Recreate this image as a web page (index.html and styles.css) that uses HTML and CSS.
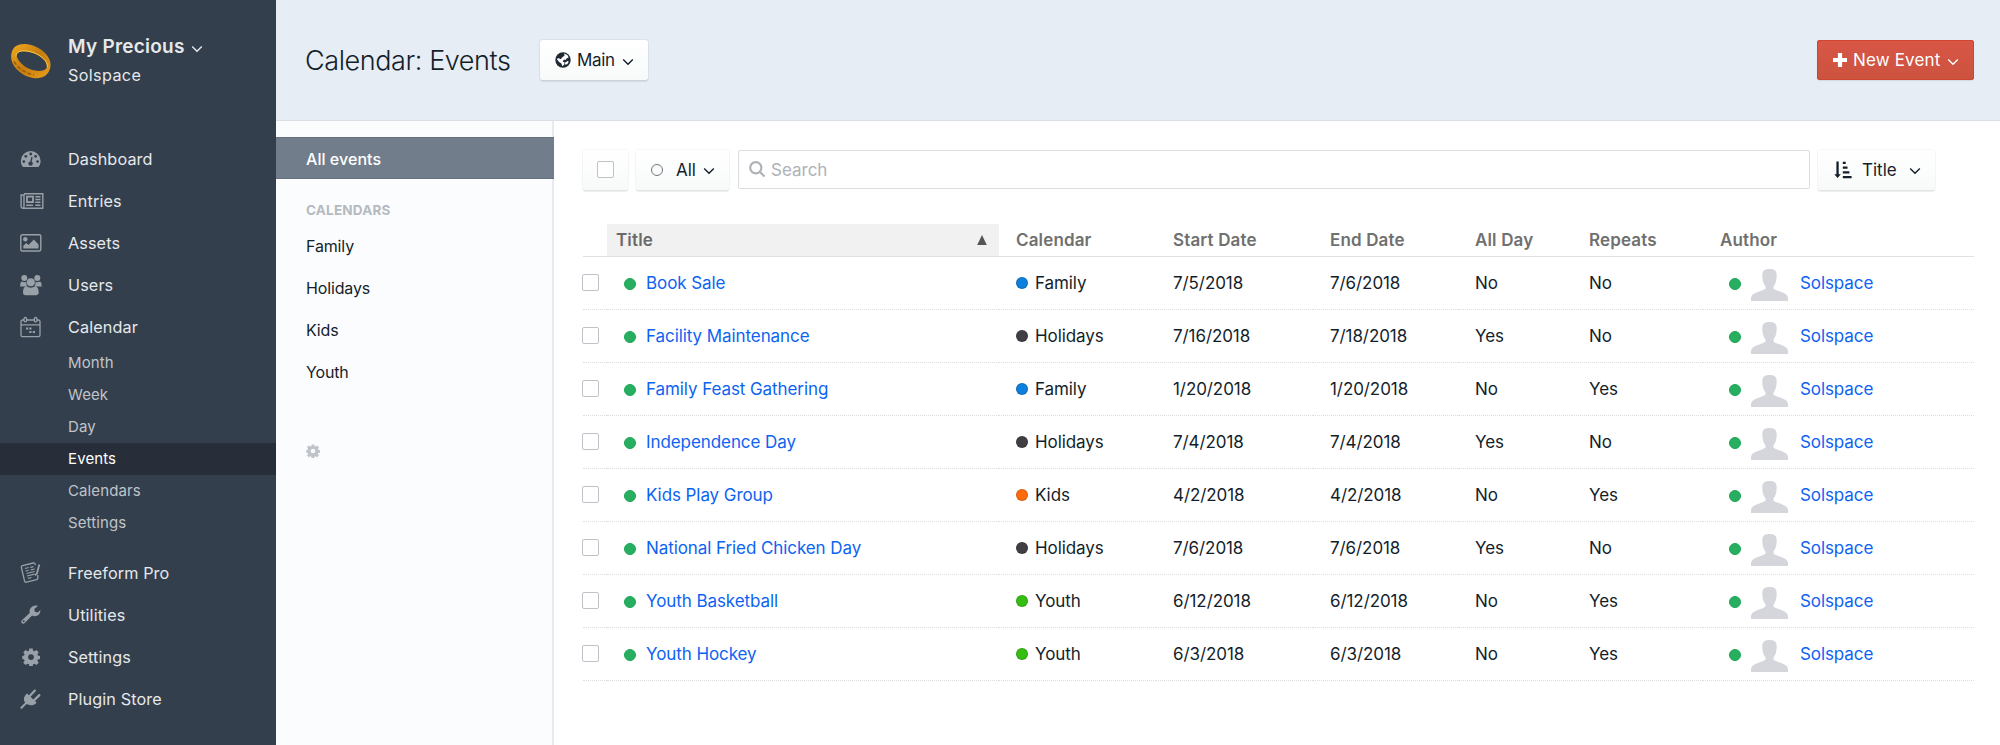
FILE: index.html
```html
<!DOCTYPE html>
<html lang="en">
<head>
<meta charset="utf-8">
<title>Calendar: Events</title>
<link rel="stylesheet" href="styles.css">
</head>
<body>
<svg class="defs" width="0" height="0">
  <symbol id="chevron" viewBox="0 0 12 8"><path d="M1.200 1.400 6 6.200l4.800-4.800" fill="none" stroke="currentColor" stroke-width="1.400"/></symbol>
  <symbol id="gear" viewBox="0 0 18 18"><path fill="currentColor" fill-rule="evenodd" d="M7.300.5h3.400l.4 2.300 1.300.5 2-1.300 2.300 2.300-1.300 2 .5 1.200 2.100.4v3.200l-2.100.4-.5 1.300 1.300 2-2.300 2.300-2-1.300-1.300.5-.4 2.200H7.300l-.4-2.200-1.300-.5-2 1.300-2.300-2.300 1.300-2-.5-1.300L.3 11V7.900l1.800-.4.5-1.200-1.300-2L3.600 2l2 1.300 1.300-.5zM9 6.200a2.900 2.900 0 1 0 0 5.800 2.900 2.900 0 0 0 0-5.800z"/></symbol>
  <symbol id="avatar" viewBox="0 0 37 32"><path fill="#d4d6dc" d="M18.500 0c5.200 0 7.200 2 7.200 6.500 0 4.500-1 8.500-3.200 11v2c.8 1.400 7 3 11 5 2.500 1.300 3.500 3 3.500 5V32H0v-2.500c0-2 1-3.700 3.500-5 4-2 10.200-3.600 11-5v-2c-2.200-2.500-3.200-6.500-3.200-11C11.300 2 13.300 0 18.500 0z"/></symbol>
</svg>
<div class="app">
  <aside class="sidebar">
    <div class="brand">
      <svg class="ring" width="42" height="38" viewBox="0 0 42 38">
        <defs><linearGradient id="gold" x1="0" y1="0" x2="1" y2="1"><stop offset="0" stop-color="#f3ab22"/><stop offset=".5" stop-color="#c47c0d"/><stop offset="1" stop-color="#eca01c"/></linearGradient></defs>
        <path fill="url(#gold)" fill-rule="evenodd" d="M1.500 11C3 4 9 1.500 15.500 2c10 .8 20 7 23.500 14.500 2 4 2 8.500.3 12.300C36.500 35 29.500 37 23 36 12.500 34.300 3.500 26.500 1.500 18c-.5-2.400-.5-4.600 0-7zM6.500 13.500c1.500 7 9.500 13 17.500 14.800 6 1.300 12 .7 12.800-3.500.8-4.500-4-9.800-11-12.800C17.500 8.500 7 8 6.500 13.500z"/>
        <path d="M5.800 14.500C6.500 7.500 15 8 23 10.500c8 2.700 14.500 8.500 14.600 14.500" fill="none" stroke="#f9c94a" stroke-width="1"/>
        <path d="M4 19.500c4.500 7.500 12 12 20 13.500" fill="none" stroke="#9a5a0a" stroke-width="1.500" stroke-dasharray="4 2"/>
      </svg>
      <div class="brand-text">
        <div class="site">My Precious <svg class="chev" width="12" height="8"><use href="#chevron"/></svg></div>
        <div class="account">Solspace</div>
      </div>
    </div>
    <nav class="nav">
      <a class="item"><svg class="icon" width="22" height="20" viewBox="0 0 22 20"><path fill="currentColor" d="M3 18C1.600 16.500.8 14.300.8 12a9.900 9.900 0 1 1 19.800 0c0 2.300-.8 4.500-2.200 6z"/><g fill="#333f4d"><circle cx="10.700" cy="5" r="1.400"/><circle cx="5.800" cy="7.300" r="1.400"/><circle cx="15.600" cy="7.300" r="1.400"/><circle cx="3.800" cy="12.600" r="1.400"/><circle cx="17.600" cy="12.600" r="1.400"/><circle cx="10.600" cy="14.600" r="2.200"/></g><path d="m10.700 14 1.300-6" stroke="#333f4d" stroke-width="1.300"/></svg>Dashboard</a>
      <a class="item"><svg class="icon" width="24" height="18" viewBox="0 0 24 18"><g fill="none" stroke="currentColor" stroke-width="1.400"><path d="M4 1.700h18.800v14.600H3A1.900 1.900 0 0 1 1.100 14.400V3H4v11.500c0 1-.4 1.800-1.200 1.800"/><rect x="7" y="4.600" width="6" height="5.500" stroke-width="1.800"/><path d="M15.300 4.700h5.200M15.300 7.500h5.200M15.300 10.300h5.200M6.200 13.200h6.800M15.300 13.200h5.200"/></g></svg>Entries</a>
      <a class="item"><svg class="icon" width="22" height="18" viewBox="0 0 22 18"><rect x=".8" y=".8" width="20" height="16.200" rx="1.400" fill="none" stroke="currentColor" stroke-width="1.400"/><circle cx="5.300" cy="5.200" r="2.200" fill="currentColor"/><path fill="currentColor" d="M3.300 14.500v-2.700l3-2.800 2.200 2.100 5.300-5.500 4.700 4.900v4z"/></svg>Assets</a>
      <a class="item"><svg class="icon" width="22" height="22" viewBox="0 0 22 22"><g fill="currentColor"><circle cx="4.300" cy="4" r="3"/><circle cx="17.300" cy="4" r="3"/><path d="M.2 12.600c0-3.200.3-5 1.800-5.100 1.400 1 3 1 4.500.2-.5 2.500.3 4 .9 4.900H1.800c-1 0-1.600.4-1.600 0zM21.600 12.600c0-3.200-.3-5-1.800-5.100-1.400 1-3 1-4.500.2.500 2.500-.3 4-.9 4.900H20c1 0 1.600.4 1.600 0z"/><circle cx="10.800" cy="8.300" r="4"/><path d="M3 18.700c0-3.900 1.200-6.300 3.500-6.500 2.600 1.900 6 1.900 8.600 0 2.300.2 3.600 2.600 3.600 6.500 0 1.600-1.200 2.500-2.800 2.500H5.700c-1.600 0-2.700-.9-2.700-2.500z"/></g></svg>Users</a>
      <a class="item"><svg class="icon" width="22" height="22" viewBox="0 0 22 22"><g fill="none" stroke="currentColor" stroke-width="1.300"><path d="M4 4H2.600A1.600 1.600 0 0 0 1 5.600V19a1.600 1.600 0 0 0 1.600 1.600h15.800A1.600 1.600 0 0 0 20 19V5.600A1.600 1.600 0 0 0 18.400 4H17M6.800 4h7.400M1 8.800h19"/><rect x="4" y="1.500" width="2.600" height="4.300" rx="1.300"/><rect x="14.300" y="1.500" width="2.600" height="4.300" rx="1.300"/></g><path fill="currentColor" d="M6 11.500h2.200v2H6zM9.300 11.500h2.200v2H9.300zM9.300 15h2.200v2H9.300zM12.800 15H15v2h-2.200z"/></svg>Calendar</a>
      <div class="sub">
        <a>Month</a><a>Week</a><a>Day</a><a class="on">Events</a><a>Calendars</a><a>Settings</a>
      </div>
      <a class="item"><svg class="icon" width="22" height="22" viewBox="0 0 22 22"><g fill="none" stroke="currentColor" stroke-width="1.300"><path d="m15.500 3-.4-1a1.500 1.500 0 0 0-1.800-1L2.500 3.700A1.500 1.500 0 0 0 1.400 5.500l3.200 13.600a1.500 1.500 0 0 0 1.800 1.100l10.300-2.500a1.500 1.500 0 0 0 1.100-1.500V13"/><path d="m5 6.500 3.600-1M5.600 9l2.800-.7M10 5.500l3.500-.8M10.500 8l4.200-1M6.500 11.500l8-2M7 14l7.500-1.900M8 16.300l3.500-.8" stroke-width="1.200"/><path d="M19.300 2.500 17 11.300l-2 2" stroke-width="1.800"/></g></svg>Freeform Pro</a>
      <a class="item"><svg class="icon" width="22" height="20" viewBox="0 0 22 20"><path fill="currentColor" fill-rule="evenodd" d="M17.800.9 14.300 4l.5 2.800 2.900.6 2.600-2.500c.3 4-2.400 6.500-5.900 6.300-1 0-1.700-.3-2.300-.7L5 17.800c-1 1-2.300 1.200-3.200.3s-.7-2.200.3-3.200l7.600-7C8.800 4 12.500-.7 17.800.9zM3.700 15.200a1 1 0 1 0 0 2 1 1 0 0 0 0-2z"/></svg>Utilities</a>
      <a class="item"><svg class="icon gear" width="18" height="18"><use href="#gear"/></svg>Settings</a>
      <a class="item"><svg class="icon" width="22" height="22" viewBox="0 0 22 22"><path fill="currentColor" d="m7 5.500 1.900 1.800L14 1.700c1.100-.9 2.600.5 1.700 1.600l-5.100 5.500 2.600 2.600 5.300-5.200c1.100-.9 2.600.6 1.700 1.700L15 13.100l1.600 1.600c-2.800 2.900-7 3.300-10 1.400L2.200 20.600c-1 .9-2.500-.5-1.600-1.600l4.500-4.300C2.900 11.500 4 8 7 5.500z"/></svg>Plugin Store</a>
    </nav>
  </aside>
  <div class="main">
    <header class="header">
      <h1>Calendar: Events</h1>
      <button class="btn site-btn"><svg class="globe" width="16" height="16" viewBox="0 0 16 16"><circle cx="8" cy="8" r="7.700" fill="#1f2935"/><path fill="#fff" d="M9.200 1.600 12.400 3l1.300 2.600-1.900.6-1.200 1.700-1.700-.3-1.200 1.800 1.900 1-.2 2.200-2.100 1.600-.9-2.600L3.800 9.800 1.700 6.700 4 6.300l1.800 1 1.500-2 2.200-1.500z"/><path fill="#fff" d="m10.200 10.500 2.400-1.600 1.200.8-1.600 2.500-2.200.4z"/></svg><span>Main</span><svg width="12" height="8"><use href="#chevron"/></svg></button>
      <button class="btn submit"><svg width="14" height="14" viewBox="0 0 14 14"><path fill="#fff" d="M4.900 0h4.200v4.900H14v4.200H9.100V14H4.900V9.100H0V4.900h4.900z"/></svg><span>New Event</span><svg width="12" height="8"><use href="#chevron"/></svg></button>
    </header>
    <div class="body">
      <nav class="sources">
        <a class="sel">All events</a>
        <h2>CALENDARS</h2>
        <a>Family</a><a>Holidays</a><a>Kids</a><a>Youth</a>
        <svg class="source-gear" width="14" height="14"><use href="#gear"/></svg>
      </nav>
      <main class="content">
        <div class="toolbar">
          <button class="btn check-btn"><i class="box"></i></button>
          <button class="btn status-btn"><i class="ring-dot"></i><span>All</span><svg width="12" height="8"><use href="#chevron"/></svg></button>
          <div class="search"><svg width="17" height="17" viewBox="0 0 17 17"><g fill="none" stroke="#adb2b8" stroke-width="2.200"><circle cx="6.800" cy="6.800" r="5.600"/><path d="m10.800 10.800 4.700 4.800"/></g></svg><span>Search</span></div>
          <button class="btn sort-btn"><svg width="18" height="18" viewBox="0 0 18 18"><path fill="#141e2b" d="M2.400.5h2.300v12.700h2.100L3.600 17 .3 13.200h2.100zM8.800.7h2.900v2.200H8.800zM8.800 5.500h4.700v2.200H8.800zM8.800 10.300h6.600v2.200H8.800zM8.800 15.100h8.800v2.200H8.800z"/></svg><span>Title</span><svg width="12" height="8"><use href="#chevron"/></svg></button>
        </div>
        <div class="table">
          <div class="row head"><div></div><div class="sorted">Title<svg width="10" height="10" viewBox="0 0 10 10"><path d="M5 0l4.800 10H.2z" fill="#555"/></svg></div><div>Calendar</div><div>Start Date</div><div>End Date</div><div>All Day</div><div>Repeats</div><div>Author</div></div>
          <div class="row"><div><i class="box"></i></div><div class="title"><i class="dot live"></i><a>Book Sale</a></div><div><i class="dot blue"></i>Family</div><div>7/5/2018</div><div>7/6/2018</div><div>No</div><div>No</div><div class="author"><i class="dot live"></i><svg width="37" height="32"><use href="#avatar"/></svg><a>Solspace</a></div></div>
          <div class="row"><div><i class="box"></i></div><div class="title"><i class="dot live"></i><a>Facility Maintenance</a></div><div><i class="dot dark"></i>Holidays</div><div>7/16/2018</div><div>7/18/2018</div><div>Yes</div><div>No</div><div class="author"><i class="dot live"></i><svg width="37" height="32"><use href="#avatar"/></svg><a>Solspace</a></div></div>
          <div class="row"><div><i class="box"></i></div><div class="title"><i class="dot live"></i><a>Family Feast Gathering</a></div><div><i class="dot blue"></i>Family</div><div>1/20/2018</div><div>1/20/2018</div><div>No</div><div>Yes</div><div class="author"><i class="dot live"></i><svg width="37" height="32"><use href="#avatar"/></svg><a>Solspace</a></div></div>
          <div class="row"><div><i class="box"></i></div><div class="title"><i class="dot live"></i><a>Independence Day</a></div><div><i class="dot dark"></i>Holidays</div><div>7/4/2018</div><div>7/4/2018</div><div>Yes</div><div>No</div><div class="author"><i class="dot live"></i><svg width="37" height="32"><use href="#avatar"/></svg><a>Solspace</a></div></div>
          <div class="row"><div><i class="box"></i></div><div class="title"><i class="dot live"></i><a>Kids Play Group</a></div><div><i class="dot orange"></i>Kids</div><div>4/2/2018</div><div>4/2/2018</div><div>No</div><div>Yes</div><div class="author"><i class="dot live"></i><svg width="37" height="32"><use href="#avatar"/></svg><a>Solspace</a></div></div>
          <div class="row"><div><i class="box"></i></div><div class="title"><i class="dot live"></i><a>National Fried Chicken Day</a></div><div><i class="dot dark"></i>Holidays</div><div>7/6/2018</div><div>7/6/2018</div><div>Yes</div><div>No</div><div class="author"><i class="dot live"></i><svg width="37" height="32"><use href="#avatar"/></svg><a>Solspace</a></div></div>
          <div class="row"><div><i class="box"></i></div><div class="title"><i class="dot live"></i><a>Youth Basketball</a></div><div><i class="dot green"></i>Youth</div><div>6/12/2018</div><div>6/12/2018</div><div>No</div><div>Yes</div><div class="author"><i class="dot live"></i><svg width="37" height="32"><use href="#avatar"/></svg><a>Solspace</a></div></div>
          <div class="row"><div><i class="box"></i></div><div class="title"><i class="dot live"></i><a>Youth Hockey</a></div><div><i class="dot green"></i>Youth</div><div>6/3/2018</div><div>6/3/2018</div><div>No</div><div>Yes</div><div class="author"><i class="dot live"></i><svg width="37" height="32"><use href="#avatar"/></svg><a>Solspace</a></div></div>
        </div>
      </main>
    </div>
  </div>
</div>
</body>
</html>
```
FILE: styles.css
```css
* { box-sizing: border-box; }
body { margin: 0; font-family: Inter, "Liberation Sans", sans-serif; font-size: 17px; color: #141e2b; background: #fff; }
.defs { position: absolute; }
svg { display: block; flex: none; }
.app { display: flex; width: 2000px; height: 745px; overflow: hidden; }

/* Sidebar */
.sidebar { width: 276px; flex: none; background: #333f4d; color: #e6e8ea; font-size: 16.2px; letter-spacing: .35px; }
.brand { display: flex; height: 138px; padding: 33px 0 0 10px; }
.ring { margin-top: 9px; }
.brand-text { margin-left: 16px; }
.site { display: flex; align-items: center; gap: 6px; height: 27px; font-size: 19px; font-weight: 600; letter-spacing: .25px; }
.site .chev { margin-top: 5px; }
.account { height: 28px; line-height: 31px; }
.nav { margin-top: -.5px; letter-spacing: .12px; }
.item { display: flex; align-items: center; height: 42px; padding-left: 68px; }
.item .icon { margin-left: -48px; margin-right: 26px; color: #99a0a8; }
.item .icon[width="24"] { margin-right: 24px; }
.item .icon.gear { margin-left: -46px; margin-right: 28px; }
.sub { margin: -.5px 0 13px; font-size: 15px; color: #c0c4c9; }
.sub a { display: block; height: 32px; line-height: 32px; padding-left: 68px; }
.sub .on { background: #272e3a; color: #fff; }

/* Header */
.main { flex: 1; display: flex; flex-direction: column; min-width: 0; }
.header { display: flex; align-items: center; height: 121px; padding: 0 26px 0 29px; background: #e6edf4; border-bottom: 1px solid #d9dfe4; }
h1 { margin: 0 29px 0 0; width: 205px; font-size: 27px; font-weight: 300; letter-spacing: -.42px; white-space: nowrap; }
.btn { display: flex; align-items: center; height: 40px; padding: 0; border: 0; border-radius: 3px; font: inherit; color: #141e2b; background: linear-gradient(#fff, #f8fafa); box-shadow: 0 0 0 1px rgba(35,50,65,.06), 0 2px 1px rgba(35,50,65,.09); }
.site-btn { width: 108px; margin-left: 1px; padding-left: 15px; gap: 6px; letter-spacing: -.3px; }
.submit { width: 157px; margin-left: auto; padding-left: 16px; gap: 6px; letter-spacing: .15px; color: #fff; background: linear-gradient(#d95646, #cb533f); box-shadow: inset 0 0 0 1px #cf4530, 0 1px 1px rgba(35,50,65,.1); }
.btn svg:last-child { margin: 3px 0 0 1px; }

/* Sources */
.body { display: flex; flex: 1; }
.sources { width: 278px; padding-top: 16px; background: #fbfcfe; border-right: 2px solid #e8eaed; font-size: 16px; }
.sources a { display: flex; align-items: center; height: 42px; padding-left: 30px; letter-spacing: -.15px; }
.sources .sel { margin-right: -2px; padding-top: 1px; color: #fff; background: #727d8b; border: 1px solid #657083; border-width: 1px 0; font-weight: 500; letter-spacing: .05px; }
h2 { margin: 0; height: 46px; padding: 22px 0 0 30px; font-size: 13.500px; line-height: 18px; font-weight: 700; letter-spacing: .2px; color: #b5bac0; }
.source-gear { margin: 51px 0 0 30px; color: #bfc3ca; }

/* Content */
.content { flex: 1; padding: 28px 26px 0 29px; }
.toolbar { display: flex; align-items: center; height: 41px; margin-right: 39px; }
.toolbar .btn { box-shadow: 0 0 0 1px rgba(35,50,65,.04), 0 2px 1px rgba(35,50,65,.09); }
.box { display: block; flex: none; width: 17px; height: 17px; border: 1px solid #bfc2c8; border-radius: 2px; background: #fff; }
.check-btn { width: 45px; justify-content: center; margin-right: 8px; }
.status-btn { width: 93px; padding-left: 15px; }
.status-btn span { margin: 0 6px 0 13px; }
.ring-dot { width: 12px; height: 12px; border: 1px solid #70767e; border-radius: 50%; }
.search { display: flex; align-items: center; flex: 1; height: 39px; margin: 0 8px 0 9px; padding-left: 10px; gap: 5px; border: 1px solid #dcdfe2; border-radius: 2px; color: #adb2b8; }
.sort-btn { width: 117px; padding-left: 16px; }
.sort-btn span { margin: 0 11px 0 10px; }

/* Table */
.table { margin-top: 34px; }
.row { display: grid; grid-template-columns: 24px 392px 157px 157px 145px 114px 131px 1fr; height: 53px; font-size: 17px; letter-spacing: -.08px; }
.row > div { display: flex; align-items: center; padding-left: 17px; border-bottom: 1px dotted #dcdedf; white-space: nowrap; }
.row > div:first-child { padding: 0 0 1px; }
.row > div:first-child .box { margin-left: -1px; }
.row.head { height: 33px; font-weight: 600; letter-spacing: .15px; color: #707070; }
.row.head > div { border-bottom: 1px solid #dfe1e4; }
.row.head .sorted { padding: 0 12px 0 9px; justify-content: space-between; background: #f1f1f1; color: #6a6a6a; }
.row a { color: #0d63f2; }
.dot { width: 12px; height: 12px; flex: none; margin-right: 7px; border-radius: 50%; border: 1px solid rgba(0,0,0,.15); }
.live { background: #27ae60; border-color: #1ba755; margin-top: 2px; }
.title .dot { margin-right: 10px; }
.author .dot { margin: 2px 10px 0 9px; }
.author svg { margin: 3px 12px 0 0; }
.blue { background: #0d7fdc; }
.dark { background: #413f43; }
.orange { background: #ff6a0d; }
.green { background: #34be12; }
```
